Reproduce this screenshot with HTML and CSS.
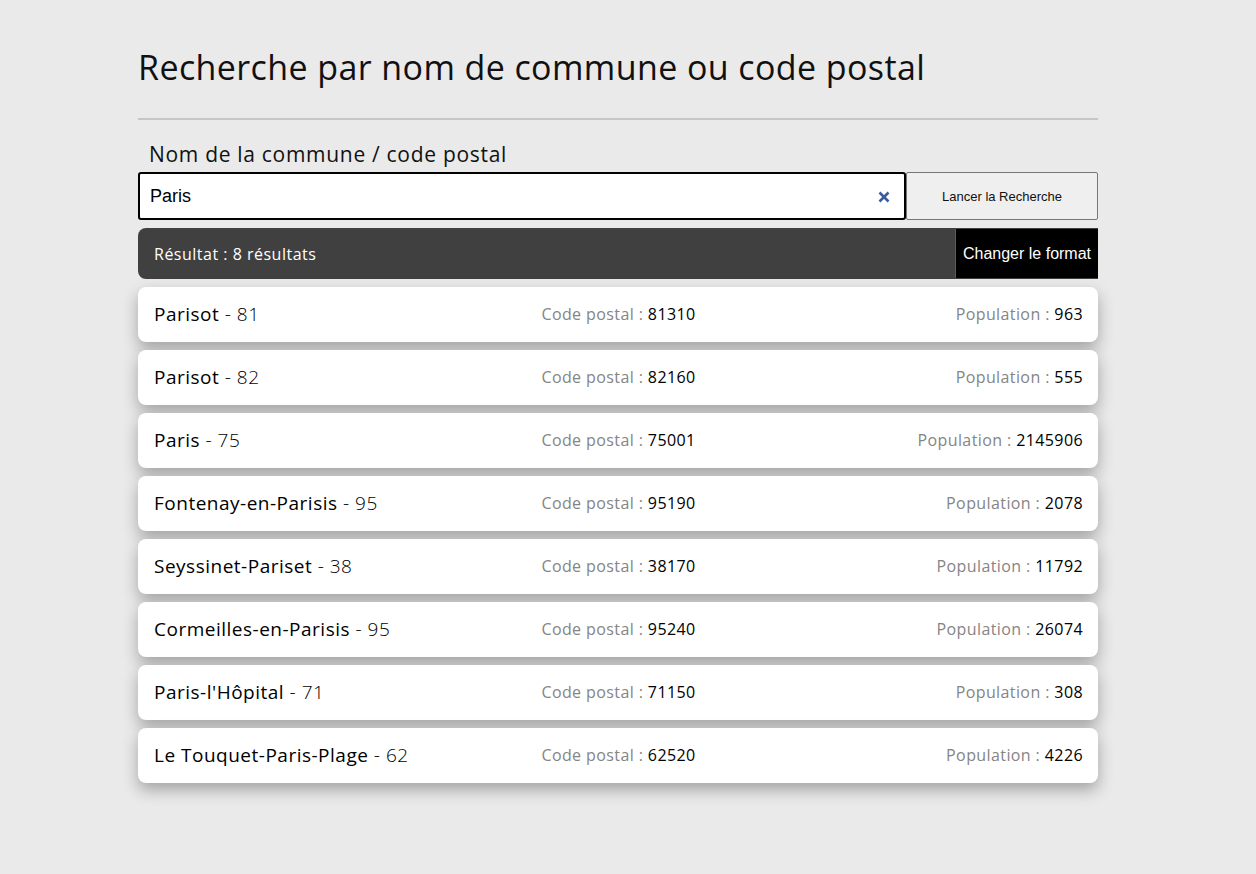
FILE: index.html
```html
<!DOCTYPE html>
<html lang="fr">
<head>
<meta charset="utf-8">
<title>Recherche par nom de commune ou code postal</title>
<link rel="stylesheet" href="styles.css">
</head>
<body>
<main class="page">
  <h1 class="title">Recherche par nom de commune ou code postal</h1>
  <hr class="sep">
  <label class="label" for="q">Nom de la commune / code postal</label>
  <div class="search">
    <div class="input-wrap">
      <input id="q" class="input" type="text" value="Paris">
      <span class="clear" aria-label="Effacer">
        <svg width="12" height="12" viewBox="0 0 12 12"><path d="M1.5 1.5 L10.5 10.5 M10.5 1.5 L1.5 10.5" stroke="#3b5c9a" stroke-width="2.6" stroke-linecap="butt"/></svg>
      </span>
    </div>
    <button class="btn-search" type="button">Lancer la Recherche</button>
  </div>
  <div class="result-bar">
    <span class="result-text">Résultat : 8 résultats</span>
    <button class="btn-format" type="button">Changer le format</button>
  </div>
  <ul class="list">
    <li class="row"><span class="name"><b>Parisot</b> - 81</span><span class="cp">Code postal : <b>81310</b></span><span class="pop">Population : <b>963</b></span></li>
    <li class="row"><span class="name"><b>Parisot</b> - 82</span><span class="cp">Code postal : <b>82160</b></span><span class="pop">Population : <b>555</b></span></li>
    <li class="row"><span class="name"><b>Paris</b> - 75</span><span class="cp">Code postal : <b>75001</b></span><span class="pop">Population : <b>2145906</b></span></li>
    <li class="row"><span class="name"><b>Fontenay-en-Parisis</b> - 95</span><span class="cp">Code postal : <b>95190</b></span><span class="pop">Population : <b>2078</b></span></li>
    <li class="row"><span class="name"><b>Seyssinet-Pariset</b> - 38</span><span class="cp">Code postal : <b>38170</b></span><span class="pop">Population : <b>11792</b></span></li>
    <li class="row"><span class="name"><b>Cormeilles-en-Parisis</b> - 95</span><span class="cp">Code postal : <b>95240</b></span><span class="pop">Population : <b>26074</b></span></li>
    <li class="row"><span class="name"><b>Paris-l'Hôpital</b> - 71</span><span class="cp">Code postal : <b>71150</b></span><span class="pop">Population : <b>308</b></span></li>
    <li class="row"><span class="name"><b>Le Touquet-Paris-Plage</b> - 62</span><span class="cp">Code postal : <b>62520</b></span><span class="pop">Population : <b>4226</b></span></li>
  </ul>
</main>
</body>
</html>
```
FILE: styles.css
```css
html, body {
  margin: 0;
  padding: 0;
  background: #eaeaea;
}
body {
  font-family: "Open Sans", "Noto Sans", sans-serif;
  color: #111;
}
.page {
  width: 960px;
  margin-left: 138px;
  padding-top: 40px;
  padding-bottom: 60px;
}
.title {
  margin: 0;
  font-size: 34px;
  font-weight: 500;
  line-height: 54px;
  letter-spacing: 0.4px;
  color: #111;
}
.sep {
  margin: 24px 0 0 0;
  border: 0;
  border-top: 2px solid #c6c6c6;
  height: 0;
}
.label {
  display: block;
  margin: 20px 0 0 11px;
  font-size: 21px;
  line-height: 28px;
  font-weight: 500;
  letter-spacing: 0.7px;
  color: #111;
}
.search {
  display: flex;
  margin-top: 4px;
  height: 48px;
}
.input-wrap {
  position: relative;
  flex: 1;
  display: flex;
}
.input {
  flex: 1;
  box-sizing: border-box;
  height: 48px;
  margin: 0;
  border: 2px solid #000;
  border-radius: 3px;
  padding: 0 40px 0 10px;
  font-family: "Liberation Sans", Arial, sans-serif;
  font-size: 18px;
  color: #000;
  background: #fff;
  outline: none;
}
.clear {
  position: absolute;
  right: 16px;
  top: 19px;
  width: 12px;
  height: 12px;
  display: block;
}
.clear svg { display: block; }
.btn-search {
  width: 192px;
  height: 48px;
  box-sizing: border-box;
  margin: 0;
  border: 1px solid #767676;
  border-radius: 2px;
  background: #efefef;
  font-family: "Liberation Sans", Arial, sans-serif;
  font-size: 13px;
  color: #111;
}
.result-bar {
  margin-top: 8px;
  height: 51px;
  background: #404040;
  border-radius: 8px 0 0 8px;
  display: flex;
  align-items: stretch;
  justify-content: space-between;
}
.result-text {
  align-self: center;
  padding-left: 16px;
  color: #fff;
  font-size: 16px;
  font-weight: 500;
  letter-spacing: 0.5px;
}
.btn-format {
  width: 143px;
  margin: 1px 0;
  border: 0;
  border-left: 1px solid #5a5a5a;
  background: #000;
  color: #fff;
  font-family: "Liberation Sans", Arial, sans-serif;
  font-size: 16px;
  padding: 0;
}
.list {
  list-style: none;
  margin: 8px 0 0 0;
  padding: 0;
  display: flex;
  flex-direction: column;
  gap: 8px;
}
.row {
  height: 55px;
  box-sizing: border-box;
  padding: 0 15px 1px 16px;
  background: #fff;
  border-radius: 8px;
  box-shadow: 0 7px 16px rgba(0, 0, 0, 0.3);
  display: grid;
  grid-template-columns: 1fr 1fr 1fr;
  align-items: center;
}
.name {
  font-size: 19px;
  font-weight: 300;
  letter-spacing: 0.5px;
  color: #000;
}
.name b {
  font-weight: 500;
  color: #000;
}
.cp, .pop {
  font-size: 16px;
  font-weight: 400;
  letter-spacing: 0.4px;
  color: #858585;
  white-space: nowrap;
}
.cp { text-align: center; }
.pop { text-align: right; }
.cp b, .pop b {
  font-weight: 500;
  color: #000;
}
```
